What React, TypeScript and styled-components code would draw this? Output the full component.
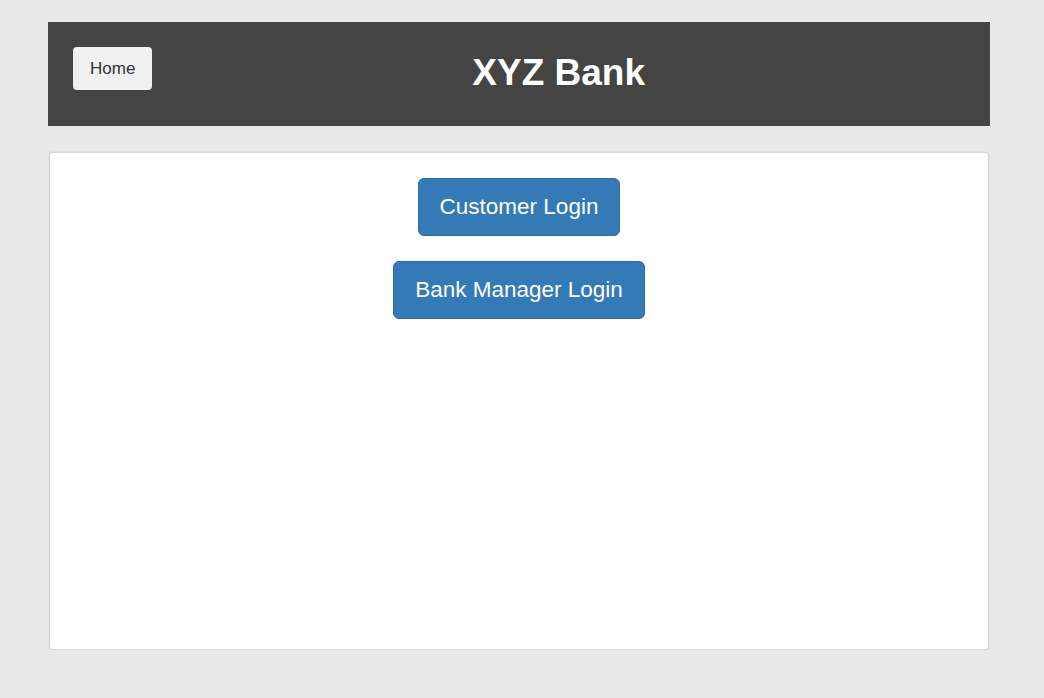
import { FC } from "react";
import styled, { createGlobalStyle } from "styled-components";

const GlobalStyle = createGlobalStyle`
  html, body {
    margin: 0;
    padding: 0;
    background: #e8e8e8;
    font-family: "Liberation Sans", Arial, sans-serif;
  }
`;

const Page = styled.div`
  width: 942px;
  padding: 22px 0 0 48px;
`;

const Header = styled.header`
  display: flex;
  align-items: flex-start;
  height: 104px;
  box-sizing: border-box;
  padding: 25px 25px 0;
  background: #444444;
`;

const HomeButton = styled.button`
  height: 43px;
  padding: 0 17px;
  border: none;
  border-radius: 4px;
  background: #f0f0f0;
  color: #333;
  font-family: inherit;
  font-size: 17px;
  cursor: pointer;
`;

const Title = styled.h1`
  flex: 1;
  margin: 4px 0 0;
  line-height: 44px;
  color: #fff;
  text-align: center;
  font-size: 37px;
  font-weight: bold;
`;

const Panel = styled.main`
  display: flex;
  flex-direction: column;
  align-items: center;
  gap: 25px;
  height: 498px;
  box-sizing: border-box;
  margin: 26px 1px 0;
  padding-top: 25px;
  background: #fff;
  border: 1px solid #d6d6d6;
  border-radius: 4px;
  box-shadow: 0 0 0 1px #e0e0e0;
`;

const LoginButton = styled.button`
  padding: 13px 21px;
  line-height: 30px;
  border: 1px solid #2e6da4;
  border-radius: 6px;
  background: #337ab7;
  color: #fff;
  font-family: inherit;
  font-size: 22.5px;
  cursor: pointer;
`;

const App: FC = () => {
  return (
    <>
      <GlobalStyle />
      <Page>
        <Header>
          <HomeButton>Home</HomeButton>
          <Title>XYZ Bank</Title>
        </Header>
        <Panel>
          <LoginButton>Customer Login</LoginButton>
          <LoginButton>Bank Manager Login</LoginButton>
        </Panel>
      </Page>
    </>
  );
};

export default App;
